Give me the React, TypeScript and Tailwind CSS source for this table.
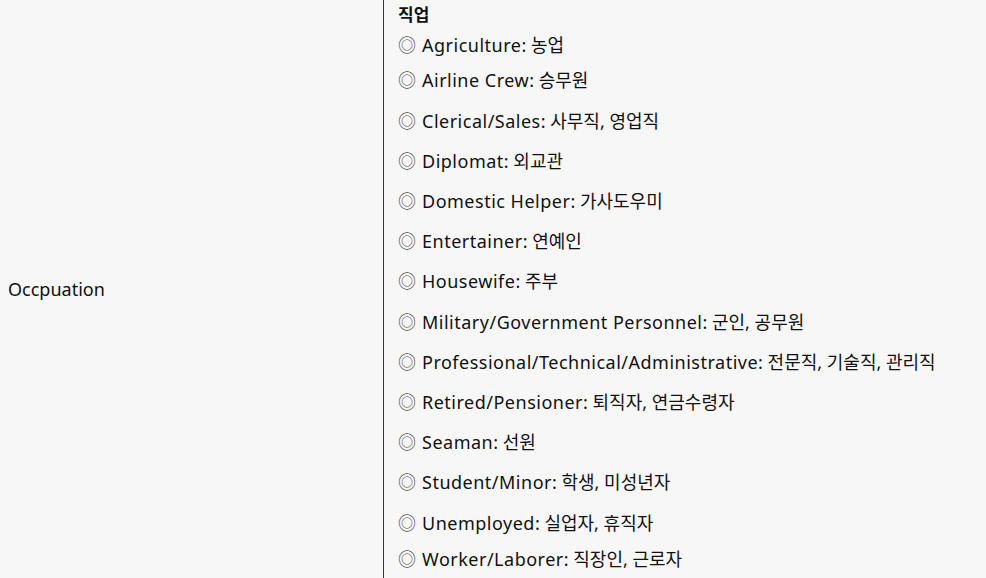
const items: [string, string][] = [
  ["Agriculture", "농업"],
  ["Airline Crew", "승무원"],
  ["Clerical/Sales", "사무직, 영업직"],
  ["Diplomat", "외교관"],
  ["Domestic Helper", "가사도우미"],
  ["Entertainer", "연예인"],
  ["Housewife", "주부"],
  ["Military/Government Personnel", "군인, 공무원"],
  ["Professional/Technical/Administrative", "전문직, 기술직, 관리직"],
  ["Retired/Pensioner", "퇴직자, 연금수령자"],
  ["Seaman", "선원"],
  ["Student/Minor", "학생, 미성년자"],
  ["Unemployed", "실업자, 휴직자"],
  ["Worker/Laborer", "직장인, 근로자"],
];

export default function App() {
  return (
    <div
      className="flex h-[578px] w-[986px] overflow-hidden bg-[#f7f7f7] text-[18px] text-[#111]"
      style={{ fontFamily: '"Noto Sans", "Noto Sans CJK KR", sans-serif' }}
    >
      <div className="flex w-[384px] shrink-0 items-center border-r border-[#333] pl-2">
        Occpuation
      </div>
      <div className="flex flex-col pl-[14px]">
        <div className="flex h-[30px] items-center text-[17px] font-semibold">직업</div>
        {items.map(([en, ko], i) => (
          <div
            key={en}
            className={`flex items-center whitespace-pre ${
              i === 0 ? "h-[30.9px]" : i === items.length - 1 ? "h-[33.6px]" : "h-[40.2px]"
            }`}
          >
            <span className="mr-[6px] text-[#555]">◎</span>
            <span className="tracking-[0.5px]">{en}</span>: {ko}
          </div>
        ))}
      </div>
    </div>
  );
}
